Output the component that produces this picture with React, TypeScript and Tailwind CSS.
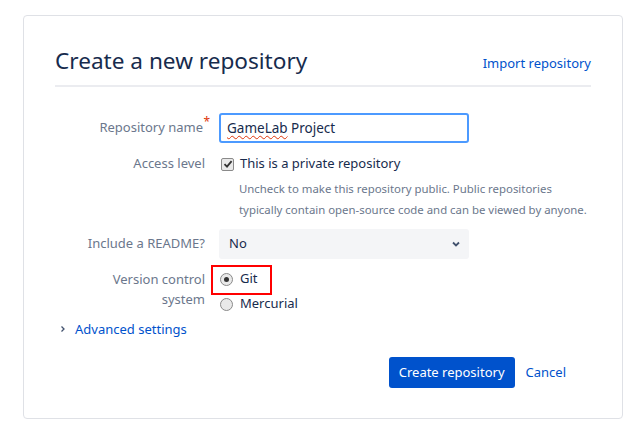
import React from "react";

const font = { fontFamily: '"Noto Sans", "Open Sans", sans-serif' };

export default function App() {
  return (
    <div className="w-[641px] h-[438px] bg-white pt-[15px] pl-[23px]" style={font}>
      <div className="w-[600px] h-[404px] rounded border border-[#dfe1e6] px-[31px] pt-[29px]">
        <div className="flex items-end justify-between border-b-2 border-[#ebecf0] pb-[8px]">
          <h1 className="text-[22.6px] leading-[32px] text-[#172b4d]">Create a new repository</h1>
          <a className="text-[13px] leading-[20px] text-[#0052cc] mb-[4px]">Import repository</a>
        </div>

        <div className="grid grid-cols-[150px_1fr] gap-x-[14px] mt-[26px] text-[13px] text-[#172b4d]">
          <div className="flex items-center justify-end h-[30px] text-[#6b778c] pr-[2px]">
            <span className="relative">
              Repository name
              <span className="absolute right-[-7px] top-[-5px] text-[#de350b] text-[12px]">*</span>
            </span>
          </div>
          <div className="h-[30px] w-[250px] border-2 border-[#4c9aff] rounded-[3px] flex items-center px-[6px] text-[13.5px]">
            <span>
              <span className="underline decoration-wavy decoration-[#de350b] decoration-1 underline-offset-2">GameLab</span> Project
            </span>
          </div>

          <div className="flex items-center justify-end h-[20px] mt-[11px] text-[#6b778c]">Access level</div>
          <div className="mt-[11px]">
            <div className="flex items-center h-[20px] gap-[6px] pl-[2px]">
              <span className="w-[13px] h-[13px] rounded-[2px] border border-[#8a8a8a] bg-[#e9e9e9] flex items-center justify-center">
                <svg width="10" height="10" viewBox="0 0 10 10">
                  <path d="M1.5 5.2 L4 7.6 L8.6 2.2" fill="none" stroke="#333" strokeWidth="1.8" />
                </svg>
              </span>
              <span>This is a private repository</span>
            </div>
            <p className="text-[11.4px] leading-[21px] text-[#6b778c] pl-[20px] mt-[4px] whitespace-nowrap">
              Uncheck to make this repository public. Public repositories
              <br />
              typically contain open-source code and can be viewed by anyone.
            </p>
          </div>

          <div className="flex items-center justify-end h-[30px] mt-[9px] text-[#6b778c]">Include a README?</div>
          <div className="mt-[9px] h-[30px] w-[250px] bg-[#f4f5f7] rounded-[3px] flex items-center justify-between pl-[10px] pr-[8px]">
            <span>No</span>
            <svg width="10" height="10" viewBox="0 0 10 10">
              <path d="M2 3.5 L5 6.5 L8 3.5" fill="none" stroke="#42526e" strokeWidth="1.8" />
            </svg>
          </div>

          <div className="text-right leading-[20px] mt-[10px] text-[#6b778c]">
            Version control
            <br />
            system
          </div>
          <div className="mt-[10px] relative">
            <div className="absolute left-[-8px] top-[-4px] w-[61px] h-[30px] border-2 border-[#ff0000]" />
            <div className="flex items-center h-[20px] gap-[7px] pl-[1px]">
              <span className="w-[13px] h-[13px] rounded-full border border-[#8a8a8a] bg-[#e9e9e9] flex items-center justify-center">
                <span className="w-[5px] h-[5px] rounded-full bg-[#333]" />
              </span>
              <span>Git</span>
            </div>
            <div className="flex items-center h-[20px] gap-[7px] pl-[1px] mt-[5px]">
              <span className="w-[13px] h-[13px] rounded-full border border-[#8a8a8a] bg-[#e9e9e9]" />
              <span>Mercurial</span>
            </div>
          </div>
        </div>

        <div className="flex items-center mt-[5px] ml-[4px] gap-[8px] text-[13px] text-[#0052cc]">
          <svg width="8" height="8" viewBox="0 0 8 8">
            <path d="M2.5 1.5 L5 4 L2.5 6.5" fill="none" stroke="#42526e" strokeWidth="1.3" />
          </svg>
          <span className="leading-[20px]">Advanced settings</span>
        </div>

        <div className="flex items-center justify-end gap-[11px] mt-[18px] pr-[25px]">
          <button className="h-[31px] px-[10px] bg-[#0052cc] text-white text-[13px] rounded-[3px]">Create repository</button>
          <a className="text-[13px] text-[#0052cc]">Cancel</a>
        </div>
      </div>
    </div>
  );
}
